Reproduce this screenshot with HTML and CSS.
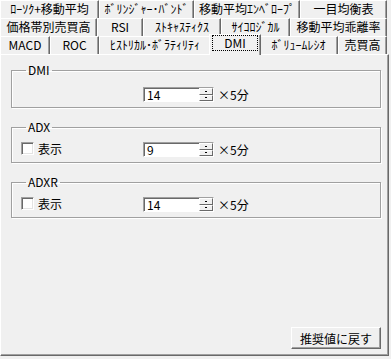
FILE: index.html
```html
<!DOCTYPE html>
<html lang="ja">
<head>
    <meta charset="UTF-8">
    <title>テクニカル指標設定</title>
    <link rel="stylesheet" href="styles.css">
</head>
<body>

    <div class="window">
        <!-- タブ -->
        <div class="tabs">
            <div class="tab-row row-1">
                <div class="tab">ﾛｰｿｸ+移動平均</div>
                <div class="tab">ﾎﾞﾘﾝｼﾞｬｰ･ﾊﾞﾝﾄﾞ</div>
                <div class="tab">移動平均ｴﾝﾍﾞﾛｰﾌﾟ</div>
                <div class="tab">一目均衡表</div>
            </div>
            <div class="tab-row row-2">
                <div class="tab">価格帯別売買高</div>
                <div class="tab">RSI</div>
                <div class="tab">ｽﾄｷｬｽﾃｨｸｽ</div>
                <div class="tab">ｻｲｺﾛｼﾞｶﾙ</div>
                <div class="tab">移動平均乖離率</div>
            </div>
            <div class="tab-row row-3">
                <div class="tab">MACD</div>
                <div class="tab">ROC</div>
                <div class="tab">ﾋｽﾄﾘｶﾙ･ﾎﾞﾗﾃｨﾘﾃｨ</div>
                <div class="tab selected"><span class="focus">DMI</span></div>
                <div class="tab">ﾎﾞﾘｭｰﾑﾚｼｵ</div>
                <div class="tab">売買高</div>
            </div>
        </div>

        <!-- DMI設定 -->
        <div class="panel">
            <fieldset class="group group-main">
                <legend>DMI</legend>
                <div class="row">
                    <div class="opt"></div>
                    <div class="spin-box">
                        <div class="field">14</div>
                        <div class="spin"><span class="spin-btn"></span><span class="spin-btn"></span></div>
                    </div>
                    <span class="unit">×5分</span>
                </div>
            </fieldset>

            <fieldset class="group">
                <legend>ADX</legend>
                <div class="row">
                    <div class="opt"><span class="check"></span><span>表示</span></div>
                    <div class="spin-box">
                        <div class="field">9</div>
                        <div class="spin"><span class="spin-btn"></span><span class="spin-btn"></span></div>
                    </div>
                    <span class="unit">×5分</span>
                </div>
            </fieldset>

            <fieldset class="group">
                <legend>ADXR</legend>
                <div class="row">
                    <div class="opt"><span class="check"></span><span>表示</span></div>
                    <div class="spin-box">
                        <div class="field">14</div>
                        <div class="spin"><span class="spin-btn"></span><span class="spin-btn"></span></div>
                    </div>
                    <span class="unit">×5分</span>
                </div>
            </fieldset>

            <button class="reset">推奨値に戻す</button>
        </div>
    </div>

</body>
</html>
```

FILE: styles.css
```css
body {
    margin: 0;
    background-color: #f0f0f0;
    font-family: "Noto Sans CJK JP", "Liberation Sans", sans-serif;
    font-size: 12px;
    color: #000;
}

.window {
    width: 389px;
    height: 356px;
    display: flex;
    flex-direction: column;
}

/* タブ */
.tabs {
    margin-right: 2px;
}

.tab-row {
    display: flex;
    height: 18px;
}

.tab {
    flex: 0 0 auto;
    box-sizing: border-box;
    padding: 0;
    line-height: 16px;
    text-align: center;
    white-space: nowrap;
    overflow: hidden;
    border-top: 1px solid #fff;
    border-left: 1px solid #fff;
    border-right: 1px solid #696969;
    box-shadow: inset -1px 0 0 #a0a0a0;
}

/* タブ幅 */
.row-1 .tab:nth-child(1) { width: 99px; }
.row-1 .tab:nth-child(2) { width: 95px; }
.row-1 .tab:nth-child(3) { width: 106px; }
.row-1 .tab:nth-child(4) { width: 87px; }

.row-2 .tab:nth-child(1) { width: 97px; }
.row-2 .tab:nth-child(2) { width: 46px; }
.row-2 .tab:nth-child(3) { width: 78px; }
.row-2 .tab:nth-child(4) { width: 69px; }
.row-2 .tab:nth-child(5) { width: 97px; }

.row-3 .tab:nth-child(1) { width: 50px; }
.row-3 .tab:nth-child(2) { width: 49px; }
.row-3 .tab:nth-child(3) { width: 112px; }
.row-3 .tab:nth-child(4) { width: 52px; }
.row-3 .tab:nth-child(5) { width: 79px; }
.row-3 .tab:nth-child(6) { width: 49px; }

.tab.selected {
    position: relative;
    z-index: 1;
    margin: -2px -2px -1px -2px;
    padding: 1px 3px 0;
    background-color: #f0f0f0;
}

.focus {
    display: block;
    line-height: 14px;
    outline: 1px dotted #000;
}

/* パネル */
.panel {
    flex: 1;
    display: flex;
    flex-direction: column;
    padding: 9px 7px 6px 10px;
    border-top: 1px solid #fff;
    border-left: 1px solid #fff;
    border-right: 1px solid #696969;
    border-bottom: 1px solid #696969;
    box-shadow: inset -1px -1px 0 #a0a0a0;
}

.group {
    margin: 0 0 13px 0;
    padding: 9px 0 5px 9px;
    border: 1px solid #a0a0a0;
    box-shadow: 1px 1px 0 #fff, inset 1px 1px 0 #fff;
    min-inline-size: 0;
}

.group-main {
    padding-top: 11px;
}

.group legend {
    margin-left: 5px;
    padding: 0 2px;
    line-height: 12px;
}

.row {
    display: flex;
    align-items: flex-start;
    height: 15px;
}

.opt {
    width: 122px;
    display: flex;
    align-items: center;
    gap: 4px;
    line-height: 13px;
}

.check {
    width: 13px;
    height: 13px;
    box-sizing: border-box;
    background-color: #fff;
    border: 1px solid;
    border-color: #a0a0a0 #fff #fff #a0a0a0;
    box-shadow: inset 1px 1px 0 #696969, inset -1px -1px 0 #e3e3e3;
}

/* スピンボックス */
.spin-box {
    display: flex;
    width: 71px;
    height: 15px;
    box-sizing: border-box;
    border: 1px solid;
    border-color: #a0a0a0 #fff #fff #a0a0a0;
}

.field {
    flex: 1;
    background-color: #fff;
    box-shadow: inset 1px 1px 0 #696969;
    padding-left: 3px;
    line-height: 13px;
}

.spin {
    width: 14px;
    display: flex;
    flex-direction: column;
}

.spin-btn {
    flex: 1;
    display: flex;
    align-items: center;
    justify-content: center;
    background-color: #f0f0f0;
    border: 1px solid;
    border-color: #fff #696969 #696969 #fff;
}

.spin-btn::after {
    content: "";
    width: 2px;
    height: 1px;
    background-color: #000;
}

.unit {
    margin-left: 4px;
    line-height: 15px;
}

/* ボタン */
.reset {
    margin-top: auto;
    align-self: flex-end;
    width: 90px;
    height: 22px;
    padding: 0;
    font-family: inherit;
    font-size: 12px;
    color: #000;
    background-color: #f0f0f0;
    border: 1px solid;
    border-color: #fff #696969 #696969 #fff;
    box-shadow: inset -1px -1px 0 #a0a0a0;
}
```
